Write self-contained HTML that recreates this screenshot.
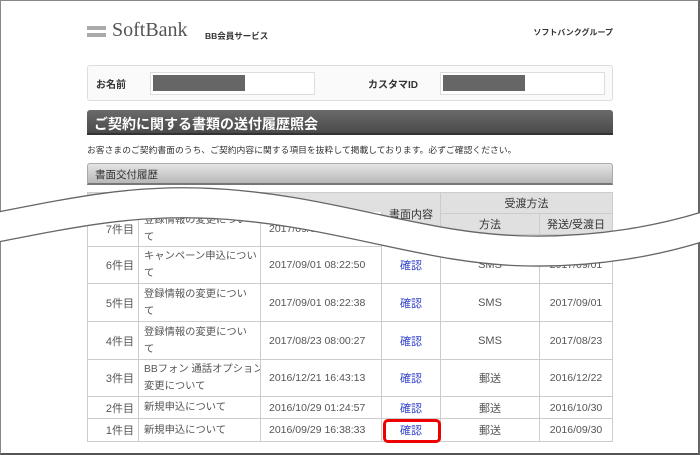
<!DOCTYPE html>
<html><head><meta charset="utf-8"><style>
*{margin:0;padding:0;box-sizing:border-box}
body{width:700px;height:455px;background:#fff;position:relative;overflow:hidden;font-family:"Liberation Sans","Noto Sans CJK JP",sans-serif;color:#444}
.a{position:absolute;white-space:nowrap}
.frame{position:absolute;left:0;top:0;width:700px;height:455px;border:1px solid #888;border-right:2px solid #666;border-bottom:2px solid #555}
.c{position:absolute;border-right:1px solid #ccc;border-bottom:1px solid #ccc;font-size:11px;color:#555;display:flex;align-items:center;white-space:nowrap;overflow:hidden;background:#fff}
</style></head><body>
<div class="frame"></div>
<div class="a" style="left:87px;top:26px;width:19px;height:4px;background:#aaa"></div>
<div class="a" style="left:87px;top:33px;width:19px;height:4px;background:#aaa"></div>
<div class="a" style="left:112px;top:19px;font-family:'Liberation Serif',serif;font-size:20px;color:#555">SoftBank</div>
<div class="a" style="left:205px;top:30px;font-size:8.5px;font-weight:bold;color:#333">BB会員サービス</div>
<div class="a" style="right:87px;top:27px;font-size:8px;font-weight:bold;color:#333">ソフトバンクグループ</div>

<div class="a" style="left:87px;top:65px;width:526px;height:36px;border:1px solid #ddd;border-radius:3px;background:#fafafa"></div>
<div class="a" style="left:96px;top:76px;font-size:10px;font-weight:bold;color:#333">お名前</div>
<div class="a" style="left:150px;top:72px;width:165px;height:23px;border:1px solid #ddd;background:#fff"></div>
<div class="a" style="left:153px;top:75px;width:92px;height:16px;background:#666"></div>
<div class="a" style="left:368px;top:76px;font-size:10px;font-weight:bold;color:#333">カスタマID</div>
<div class="a" style="left:440px;top:72px;width:165px;height:23px;border:1px solid #ddd;background:#fff"></div>
<div class="a" style="left:443px;top:75px;width:82px;height:16px;background:#666"></div>

<div class="a" style="left:87px;top:110px;width:526px;height:25px;background:linear-gradient(#6a6a6a,#4a4a4a);border-radius:3px 3px 0 0;border-bottom:2px solid #333"></div>
<div class="a" style="left:94px;top:114px;font-size:14px;font-weight:bold;color:#fff">ご契約に関する書類の送付履歴照会</div>
<div class="a" style="left:87px;top:143px;font-size:8.8px;color:#333">お客さまのご契約書面のうち、ご契約内容に関する項目を抜粋して掲載しております。必ずご確認ください。</div>
<div class="a" style="left:87px;top:163px;width:526px;height:22px;background:linear-gradient(#e4e4e4,#b8b8b8);border:1px solid #aaa;border-bottom:2px solid #777;border-radius:3px 3px 0 0"></div>
<div class="a" style="left:95px;top:167px;font-size:10.5px;color:#333">書面交付履歴</div>

<div class="a" style="left:87px;top:192px;width:526px;height:250px;border-left:1px solid #ccc;border-top:1px solid #ccc"></div>

<div class="c" style="left:88px;top:193px;width:295px;height:42px;background:#e0e0e0"></div>
<div class="c" style="left:382px;top:193px;width:59px;height:42px;background:#e0e0e0;justify-content:center;color:#333">書面内容</div>
<div class="c" style="left:441px;top:193px;width:172px;height:21px;background:#e0e0e0;justify-content:center;color:#333">受渡方法</div>
<div class="c" style="left:441px;top:214px;width:99px;height:21px;background:#e0e0e0;justify-content:center;color:#333">方法</div>
<div class="c" style="left:540px;top:214px;width:73px;height:21px;background:#e0e0e0;justify-content:center;color:#333">発送/受渡日</div>

<div id="rows"></div>
<script>
var rows=[
[212,247,"7件目","登録情報の変更につい<br>て","2017/09/01 08:22:55","SMS","2017/09/01",1],
[247,284,"6件目","キャンペーン申込につい<br>て","2017/09/01 08:22:50","SMS","2017/09/01"],
[284,322,"5件目","登録情報の変更につい<br>て","2017/09/01 08:22:38","SMS","2017/09/01"],
[322,360,"4件目","登録情報の変更につい<br>て","2017/08/23 08:00:27","SMS","2017/08/23"],
[360,397,"3件目","BBフォン 通話オプション<br>変更について","2016/12/21 16:43:13","郵送","2016/12/22"],
[397,419,"2件目","新規申込について","2016/10/29 01:24:57","郵送","2016/10/30"],
[419,442,"1件目","新規申込について","2016/09/29 16:38:33","郵送","2016/09/30"]];
var h="";
rows.forEach(function(r){var t=r[0],H=r[1]-r[0];
h+='<div class="c" style="left:88px;top:'+t+'px;width:51px;height:'+H+'px;justify-content:flex-end;padding-right:4px">'+r[2]+'</div>';
h+='<div class="c" style="left:139px;top:'+t+'px;width:122px;height:'+H+'px;padding-left:5px;line-height:17px;font-size:10.3px">'+r[3]+'</div>';
h+='<div class="c" style="left:261px;top:'+t+'px;width:121px;height:'+H+'px;padding-left:8px;font-size:10.5px">'+r[4]+'</div>';
if(r[7])return;
h+='<div class="c" style="left:382px;top:'+t+'px;width:59px;height:'+H+'px;justify-content:center;color:#3344cc">確認</div>';
h+='<div class="c" style="left:441px;top:'+t+'px;width:99px;height:'+H+'px;justify-content:center">'+r[5]+'</div>';
h+='<div class="c" style="left:540px;top:'+t+'px;width:73px;height:'+H+'px;justify-content:center;font-size:10.5px">'+r[6]+'</div>';});
document.getElementById('rows').innerHTML=h;
</script>
<div class="a" style="left:383px;top:419px;width:58px;height:24px;border:3px solid #e00;border-radius:5px"></div>

<svg class="a" style="left:0;top:0" width="700" height="455">
<path d="M-2,212 C80,196 130,186 200,188 C330,192 420,235 530,236 C600,237 660,225 702,212 L702,242 C660,255 600,267 530,266 C420,265 330,222 200,218 C130,216 80,226 -2,242 Z" fill="#fff"/>
<path d="M-2,212 C80,196 130,186 200,188 C330,192 420,235 530,236 C600,237 660,225 702,212" fill="none" stroke="#666" stroke-width="1.3"/>
<path d="M-2,242 C80,226 130,216 200,218 C330,222 420,265 530,266 C600,267 660,255 702,242" fill="none" stroke="#666" stroke-width="1.3"/>
</svg>
</body></html>
